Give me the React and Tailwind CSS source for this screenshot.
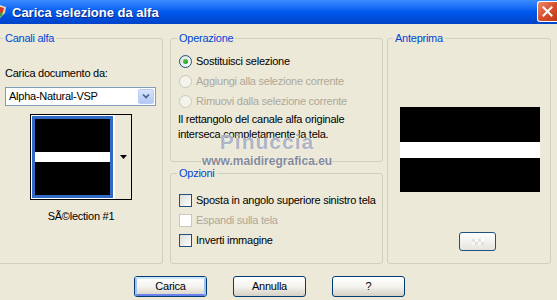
import React from 'react';

function Radio({ checked, disabled, label }) {
  return (
    <div className="flex items-center h-[20px]">
      <span
        className={`w-[13px] h-[13px] rounded-full border flex items-center justify-center ${
          disabled
            ? 'border-[#CAC8BB] bg-[#F5F4EA]'
            : 'border-[#1C5180] bg-gradient-to-br from-[#DCDCD7] to-white'
        }`}
      >
        {checked && (
          <span className="w-[5px] h-[5px] rounded-full bg-gradient-to-br from-[#55D051] to-[#1A9B1A]"></span>
        )}
      </span>
      <span className={`ml-[4px] whitespace-nowrap ${disabled ? 'text-[#ACA899]' : 'text-black'}`}>{label}</span>
    </div>
  );
}

function Check({ disabled, label }) {
  return (
    <div className="flex items-center h-[20px]">
      <span
        className={`w-[13px] h-[13px] border ${
          disabled
            ? 'border-[#CAC8BB] bg-white'
            : 'border-[#1C5180] bg-gradient-to-br from-[#DCDCD7] to-white'
        }`}
      ></span>
      <span className={`ml-[4px] whitespace-nowrap ${disabled ? 'text-[#ACA899]' : 'text-black'}`}>{label}</span>
    </div>
  );
}

function XpButton({ children, isDefault }) {
  return (
    <button className="w-[73px] h-[21px] rounded-[3px] border border-[#003C74] bg-gradient-to-b from-white via-[#F4F3EE] to-[#D6D0C5] p-0">
      <span
        className={`flex items-center justify-center w-full h-full rounded-[2px] ${
          isDefault ? 'border-2 border-[#A6C2F3] border-t-[#CEE7FF] border-b-[#6982EE]' : ''
        }`}
      >
        {children}
      </span>
    </button>
  );
}

export default function App() {
  return (
    <div className="relative w-[557px] h-[300px] overflow-hidden bg-[#ECE9D8] font-['Liberation_Sans',Arial,sans-serif] text-[11px] leading-[13px] tracking-[-0.25px] text-black">
      {/* Title bar */}
      <div className="h-[24px] flex items-start bg-gradient-to-b from-[#3A8CFF] via-[#0058EE] to-[#0043C8]">
        <svg width="8" height="16" viewBox="0 0 8 16" className="mt-[4px]">
          <path d="M0 1 L6 3 L5 9 L0 14 Z" fill="#E8D8B0" />
          <path d="M0 3 L4 4 L3 8 L0 10 Z" fill="#D23A2A" />
          <path d="M0 9 L3 8 L2 12 L0 13 Z" fill="#3AA03A" />
        </svg>
        <span className="ml-[4px] mt-[5px] text-[13px] leading-[15px] tracking-normal font-bold text-white [text-shadow:1px_1px_0_#0A2A8C]">
          Carica selezione da alfa
        </span>
        <div className="ml-auto mt-[1px] w-[20px] h-[21px] rounded-l-[3px] border border-r-0 border-white bg-gradient-to-br from-[#E98A6A] via-[#D9502E] to-[#C03818] flex items-center justify-center">
          <svg width="11" height="11" viewBox="0 0 11 11">
            <path d="M1.5 1.5 L9.5 9.5 M9.5 1.5 L1.5 9.5" stroke="white" strokeWidth="2" strokeLinecap="square" />
          </svg>
        </div>
      </div>

      {/* Group row */}
      <div className="flex pt-[8px] h-[240px]">
        {/* Canali alfa */}
        <fieldset className="w-[163px] border border-l-0 border-[#D0D0BF] rounded-r-[3px]">
          <legend className="ml-[3px] px-[2px] text-[#0046D5]">Canali alfa</legend>
          <div className="mt-[22px] pl-[5px]">Carica documento da:</div>
          <div className="mt-[7px] ml-[5px] w-[151px] h-[19px] bg-white border border-[#7F9DB9] flex items-center">
            <span className="pl-[3px] flex-1">Alpha-Natural-VSP</span>
            <span className="w-[16px] h-[15px] mr-[1px] rounded-[2px] border border-[#B9CDF6] bg-gradient-to-b from-[#D6E3FD] to-[#B4C8F5] flex items-center justify-center">
              <svg width="8" height="5" viewBox="0 0 8 5">
                <path d="M1 0.5 L4 3.5 L7 0.5" stroke="#4D6185" strokeWidth="1.6" fill="none" />
              </svg>
            </span>
          </div>
          <div className="mt-[8px] ml-[30px] w-[102px] h-[86px] border border-black flex">
            <div className="w-[83px] p-[1px] bg-white">
              <div className="h-full border-[3px] border-[#316AC5] bg-black flex flex-col">
                <div className="h-[33px]"></div>
                <div className="h-[10px] bg-white"></div>
              </div>
            </div>
            <div className="flex-1 border-l border-white flex items-center justify-center">
              <svg width="7" height="4" viewBox="0 0 7 4">
                <path d="M0 0 L7 0 L3.5 4 Z" fill="black" />
              </svg>
            </div>
          </div>
          <div className="mt-[10px] text-center">SÃ©lection #1</div>
        </fieldset>

        {/* Middle column */}
        <div className="ml-[7px] w-[213px] flex flex-col gap-[5px]">
          <fieldset className="h-[130px] border border-[#D0D0BF] rounded-[3px]">
            <legend className="ml-[6px] px-[2px] text-[#0046D5]">Operazione</legend>
            <div className="mt-[6px] pl-[8px]">
              <Radio checked label="Sostituisci selezione" />
              <Radio disabled label="Aggiungi alla selezione corrente" />
              <Radio disabled label="Rimuovi dalla selezione corrente" />
            </div>
            <div className="mt-[1px] pl-[7px] leading-[15px] whitespace-nowrap">
              Il rettangolo del canale alfa originale
              <br />
              interseca completamente la tela.
            </div>
          </fieldset>
          <fieldset className="flex-1 border border-[#D0D0BF] rounded-[3px]">
            <legend className="ml-[6px] px-[2px] text-[#0046D5]">Opzioni</legend>
            <div className="mt-[10px] pl-[8px]">
              <Check label="Sposta in angolo superiore sinistro tela" />
              <Check disabled label="Espandi sulla tela" />
              <Check label="Inverti immagine" />
            </div>
          </fieldset>
        </div>

        {/* Anteprima */}
        <fieldset className="ml-[4px] w-[164px] border border-[#D0D0BF] rounded-[3px]">
          <legend className="ml-[5px] px-[2px] text-[#0046D5]">Anteprima</legend>
          <div className="mt-[62px] ml-[12px] w-[140px] h-[85px] bg-black flex flex-col">
            <div className="h-[35px]"></div>
            <div className="h-[16px] bg-white"></div>
          </div>
          <div className="mt-[40px] ml-[71px] w-[37px] h-[19px] rounded-[3px] border border-[#1C5180] bg-gradient-to-b from-white to-[#E6E4DC] flex items-center justify-center">
            <div className="grid grid-cols-4 w-[12px] h-[6px] opacity-60">
              <span className="bg-[#D8D8D8]"></span>
              <span className="bg-white"></span>
              <span className="bg-[#D8D8D8]"></span>
              <span className="bg-white"></span>
              <span className="bg-white"></span>
              <span className="bg-[#D8D8D8]"></span>
              <span className="bg-white"></span>
              <span className="bg-[#D8D8D8]"></span>
            </div>
          </div>
        </fieldset>
      </div>

      {/* Buttons */}
      <div className="flex mt-[12px] pl-[134px] gap-[26px]">
        <XpButton isDefault>Carica</XpButton>
        <XpButton>Annulla</XpButton>
        <XpButton>?</XpButton>
      </div>

      {/* Watermark */}
      <div className="absolute left-[205px] top-[131px] w-[124px] flex flex-col items-center pointer-events-none tracking-normal">
        <span className="text-[21px] leading-[22px] font-bold tracking-[1px] text-[#9AA2B8]/80 [text-shadow:0_0_2px_white]">
          Pinuccia
        </span>
        <span className="mt-[2px] text-[12px] leading-[13px] font-bold text-[#858A99] [text-shadow:0_0_2px_white]">
          www.maidiregrafica.eu
        </span>
      </div>
    </div>
  );
}
